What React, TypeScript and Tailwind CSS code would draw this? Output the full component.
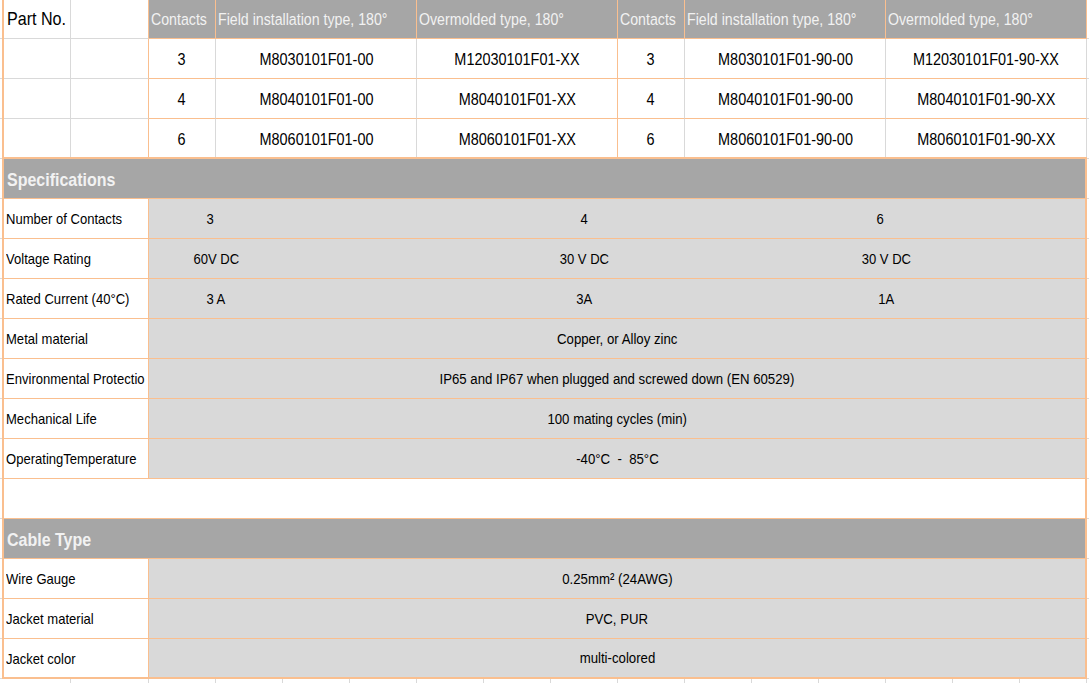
import React from "react";

type TProps = { children: React.ReactNode; className?: string };

function TL({ children, className = "" }: TProps) {
  return (
    <span className={"inline-block whitespace-pre origin-left scale-x-[0.87] " + className}>
      {children}
    </span>
  );
}

function TC({ children, className = "" }: TProps) {
  return (
    <span className={"inline-block whitespace-pre origin-center scale-x-[0.87] " + className}>
      {children}
    </span>
  );
}

const codes = [
  ["3", "M8030101F01-00", "M12030101F01-XX", "3", "M8030101F01-90-00", "M12030101F01-90-XX"],
  ["4", "M8040101F01-00", "M8040101F01-XX", "4", "M8040101F01-90-00", "M8040101F01-90-XX"],
  ["6", "M8060101F01-00", "M8060101F01-XX", "6", "M8060101F01-90-00", "M8060101F01-90-XX"],
];

const specs3: [string, string[], string[]][] = [
  ["Number of Contacts", ["3", "4", "6"], ["pr-[12px]", "", "pr-[12px]"]],
  ["Voltage Rating", ["60V DC", "30 V DC", "30 V DC"], ["", "", ""]],
  ["Rated Current (40°C)", ["3 A", "3A", "1A"], ["", "", ""]],
];

const specsFull: [string, string][] = [
  ["Metal material", "Copper, or Alloy zinc"],
  ["Environmental Protectio", "IP65 and IP67 when plugged and screwed down (EN 60529)"],
  ["Mechanical Life", "100 mating cycles (min)"],
  ["OperatingTemperature", "-40°C  -  85°C"],
];

const cable: [string, string][] = [
  ["Wire Gauge", "0.25mm² (24AWG)"],
  ["Jacket material", "PVC, PUR"],
  ["Jacket color", "multi-colored"],
];

const GRID = "grid grid-cols-[67px_78px_repeat(14,67px)]";

function HeaderRow() {
  const gray = "bg-[#a6a6a6] border-r border-b border-[#fabf8f] flex items-center pl-[2px] overflow-hidden text-[#f2f2f2] text-[16.3px]";
  return (
    <div className={GRID + " h-[39px]"}>
      <div className="border-r border-b border-[#d9d9d9] flex items-center pl-[3px] overflow-hidden text-black text-[18.5px]">
        <TL>Part No.</TL>
      </div>
      <div className="border-r border-b border-r-[#fabf8f] border-b-[#d9d9d9]" />
      <div className={gray}>
        <TL>Contacts</TL>
      </div>
      <div className={gray + " col-span-3"}>
        <TL>Field installation type, 180°</TL>
      </div>
      <div className={gray + " col-span-3"}>
        <TL>Overmolded type, 180°</TL>
      </div>
      <div className={gray}>
        <TL>Contacts</TL>
      </div>
      <div className={gray + " col-span-3"}>
        <TL>Field installation type, 180°</TL>
      </div>
      <div className={gray + " col-span-3"}>
        <TL>Overmolded type, 180°</TL>
      </div>
    </div>
  );
}

function DataRow({ row, last }: { row: string[]; last: boolean }) {
  const h = last ? " h-[38px]" : " h-[40px]";
  const bb = last ? "" : " border-b border-b-[#fabf8f]";
  const bbG = last ? "" : " border-b border-b-[#d9d9d9]";
  const cell = "flex items-center justify-center pt-[4px] overflow-hidden text-black text-[16.6px] border-r";
  return (
    <div className={GRID + h}>
      <div className={"border-r border-r-[#d9d9d9]" + bbG} />
      <div className={"border-r border-r-[#fabf8f]" + bbG} />
      <div className={cell + " border-r-[#d9d9d9]" + bb}>
        <TC>{row[0]}</TC>
      </div>
      <div className={cell + " col-span-3 border-r-[#d9d9d9]" + bb}>
        <TC>{row[1]}</TC>
      </div>
      <div className={cell + " col-span-3 border-r-[#fabf8f]" + bb}>
        <TC>{row[2]}</TC>
      </div>
      <div className={cell + " border-r-[#d9d9d9]" + bb}>
        <TC>{row[3]}</TC>
      </div>
      <div className={cell + " col-span-3 border-r-[#d9d9d9]" + bb}>
        <TC>{row[4]}</TC>
      </div>
      <div className={cell + " col-span-3 border-r-[#d9d9d9]" + bb}>
        <TC>{row[5]}</TC>
      </div>
    </div>
  );
}

function Label({ text }: { text: string }) {
  return (
    <div className="w-[145px] shrink-0 bg-white border-r border-r-[#fabf8f] flex items-center pl-[2px] overflow-hidden text-black text-[15px]">
      <TL>{text}</TL>
    </div>
  );
}

function SpecRow3({ label, vals, pads }: { label: string; vals: string[]; pads: string[] }) {
  return (
    <div className="flex h-[40px] border-b border-b-[#fabf8f]">
      <Label text={label} />
      <div className="flex-1 bg-[#d9d9d9] flex text-black text-[15px]">
        <div className={"w-[134px] flex items-center justify-center " + pads[0]}>
          <TC>{vals[0]}</TC>
        </div>
        <div className="w-[201px]" />
        <div className={"w-[201px] flex items-center justify-center " + pads[1]}>
          <TC>{vals[1]}</TC>
        </div>
        <div className="w-[134px]" />
        <div className={"w-[134px] flex items-center justify-center " + pads[2]}>
          <TC>{vals[2]}</TC>
        </div>
      </div>
    </div>
  );
}

function SpecRowFull({ label, val, last }: { label: string; val: string; last?: boolean }) {
  return (
    <div className={last ? "flex h-[38px]" : "flex h-[40px] border-b border-b-[#fabf8f]"}>
      <Label text={label} />
      <div className="flex-1 bg-[#d9d9d9] flex items-center justify-center text-black text-[15.2px]">
        <TC>{val}</TC>
      </div>
    </div>
  );
}

function TitleRow({ text }: { text: string }) {
  return (
    <div className="h-[40px] bg-[#a6a6a6] border-b border-b-[#fabf8f] flex items-center pl-[3px] pt-[4px] text-[#f2f2f2] text-[18.4px] font-bold">
      <TL>{text}</TL>
    </div>
  );
}

function SideStrip() {
  const rows = Array.from({ length: 16 });
  return (
    <div className="w-[2px] shrink-0 flex flex-col">
      <div className="h-[39px] border-b border-b-[#d9d9d9]" />
      {rows.map((_, i) => (
        <div key={i} className="h-[40px] border-b border-b-[#d9d9d9]" />
      ))}
    </div>
  );
}

export default function App() {
  return (
    <div className="w-[1089px] h-[683px] overflow-hidden bg-white flex font-['Liberation_Sans',Arial,sans-serif] leading-none">
      <SideStrip />
      <div className="w-[1085px] shrink-0 flex flex-col">
        <div className="border-l-2 border-l-[#fabf8f]">
          <HeaderRow />
          {codes.map((r, i) => (
            <DataRow key={i} row={r} last={i === codes.length - 1} />
          ))}
        </div>
        <div className="border-2 border-[#fabf8f] flex flex-col">
          <TitleRow text="Specifications" />
          {specs3.map(([l, v, p]) => (
            <SpecRow3 key={l} label={l} vals={v} pads={p} />
          ))}
          {specsFull.map(([l, v]) => (
            <SpecRowFull key={l} label={l} val={v} />
          ))}
          <div className="h-[40px] bg-white border-b border-b-[#fabf8f]" />
          <TitleRow text="Cable Type" />
          {cable.map(([l, v], i) => (
            <SpecRowFull key={l} label={l} val={v} last={i === cable.length - 1} />
          ))}
        </div>
        <div className="flex h-[4px]">
          <div className="w-[2px] shrink-0" />
          <div className={GRID + " h-[4px]"}>
            {Array.from({ length: 16 }).map((_, i) => (
              <div key={i} className="border-r border-r-[#d9d9d9]" />
            ))}
          </div>
        </div>
      </div>
      <SideStrip />
    </div>
  );
}
